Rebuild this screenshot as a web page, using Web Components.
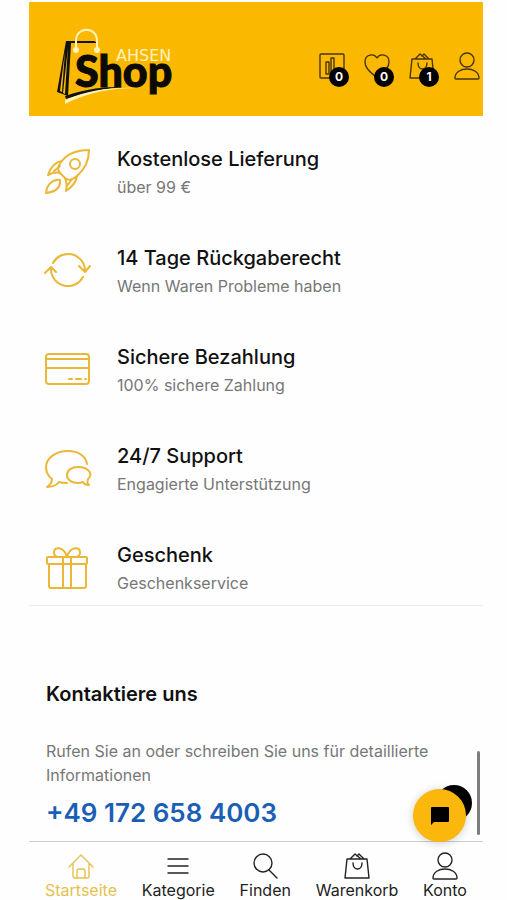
<!DOCTYPE html>
<html lang="de">
<head>
<meta charset="utf-8">
<meta name="viewport" content="width=device-width, initial-scale=1">
<title>Ahsen Shop</title>
<style>
  body {
    margin: 0;
    background: #fefefe;
    color: #111;
    font-family: Inter, "Liberation Sans", sans-serif;
  }
</style>
</head>
<body>
<shop-page>
  <shop-header slot="header"></shop-header>
  <feature-list>
    <feature-item icon="rocket"><span slot="title">Kostenlose Lieferung</span>über 99 €</feature-item>
    <feature-item icon="refresh"><span slot="title">14 Tage Rückgaberecht</span>Wenn Waren Probleme haben</feature-item>
    <feature-item icon="card"><span slot="title">Sichere Bezahlung</span>100% sichere Zahlung</feature-item>
    <feature-item icon="chat"><span slot="title">24/7 Support</span>Engagierte Unterstützung</feature-item>
    <feature-item icon="gift"><span slot="title">Geschenk</span>Geschenkservice</feature-item>
  </feature-list>
  <contact-box phone="+49 172 658 4003">
    <span slot="title">Kontaktiere uns</span>
    Rufen Sie an oder schreiben Sie uns für detaillierte Informationen
  </contact-box>
  <chat-button slot="overlay"></chat-button>
  <tab-bar slot="footer">
    <tab-item icon="home" active>Startseite</tab-item>
    <tab-item icon="menu">Kategorie</tab-item>
    <tab-item icon="search">Finden</tab-item>
    <tab-item icon="bag">Warenkorb</tab-item>
    <tab-item icon="user">Konto</tab-item>
  </tab-bar>
</shop-page>

<script>
// feature icons are drawn on a 44 grid, the small ones on 26
const icons = {
  rocket: [44, `<g transform="translate(-1 -2)"><path d="M44 1C31 1 22 5 16 13c-4 5-3 9-1 11l5 5c3 3 8 2 12-2C40 20 44 12 44 1Z"/><circle cx="30" cy="15" r="5"/><path d="M17 12C10 13 6 17 3 26c4-2 8-3 12-2M32 27c-1 7-5 11-11 15 1-5 1-9-1-13M27 30l-5 7M15 17l-6 5M15 31c-7-1-13 4-14 13 8-1 15-4 14-13Z"/></g>`],
  refresh: [44, `<path d="M7 13a17 17 0 0 1 32 7v1M33 16l6 6 5-6M37 27A17 17 0 0 1 5 20v-2M-1 23l6-6 5 5"/>`],
  card: [44, `<rect y="5" width="43" height="30" rx="3"/><path d="M0 10h43M0 19h43"/><path stroke-dasharray="3 4 5 4 1 9" d="M23 30h18"/>`],
  chat: [44, `<path d="M41 16C40 8 32 3 22 3 10 3 0 10 0 19c0 5 2 9 6 12 0 4-2 6-5 8 6 0 9-1 12-5 3 1 5 1 8 1"/><path d="M32 19c-6 0-11 3-11 8s5 8 11 8c2 0 3 0 5-1 1 2 3 3 6 3-2-2-2-3-1-6 6-5 0-12-10-12Z"/>`],
  gift: [44, `<rect x="1" y="10" width="40" height="7" rx="1"/><path d="M3 17v22q0 2 2 2h33q2 0 2-2V17M17 10v31M25 10v31M21 10C18-1 7-1 8 6c0 2 1 3 3 4M21 10C24-1 35-1 34 6c0 2-1 3-3 4"/>`],
  chart: [26, `<rect x="1" y="1" width="24" height="24" rx="1"/><path d="M7 9h3v12H7zM12 5h3v16h-3z"/>`],
  heart: [26, `<path d="M13 5C10 0 1 1 1 9c0 7 7 11 12 16 5-5 12-9 12-16 0-8-9-9-12-4Z"/>`],
  bag: [26, `<path d="M3 6h20l2 19H1ZM6 6l5-5 6 5M13 3l2-2 5 5M9 10c0 8 9 8 9 0"/>`],
  user: [26, `<circle cx="13" cy="7" r="7"/><path d="M1 25c0-12 24-12 24 0q0 1-1 1H2q-1 0-1-1Z"/>`],
  home: [26, `<path d="M1 14 13 2l12 12M5 10v13q0 2 2 2h12q2 0 2-2V10M9 25v-7q0-2 2-2h4q2 0 2 2v7"/>`],
  menu: [26, `<path d="M3 6h20M3 13h20M3 20h20"/>`],
  search: [26, `<circle cx="11" cy="10" r="9"/><path d="m17 17 8 8"/>`],
};

class ShopIcon extends HTMLElement {
  connectedCallback() {
    const [size, shapes] = icons[this.getAttribute("name")];
    const width = size === 44 ? 2 : 1.4;
    this.attachShadow({ mode: "open" }).innerHTML = `
      <style>
        :host { display: block; flex: none; width: ${size}px; height: ${size}px; }
        svg { display: block; overflow: visible; }
      </style>
      <svg width="${size}" height="${size}" viewBox="0 0 ${size} ${size}" fill="none" stroke="currentColor"
        stroke-width="${width}" stroke-linejoin="round" stroke-linecap="round" aria-hidden="true">${shapes}</svg>`;
  }
}

class ShopPage extends HTMLElement {
  connectedCallback() {
    this.attachShadow({ mode: "open" }).innerHTML = `
      <style>
        :host {
          position: relative;
          display: flex;
          flex-direction: column;
          box-sizing: border-box;
          min-height: 100vh;
          padding: 2px 24px 0 29px;
        }
        main { flex: 1; }
      </style>
      <slot name="header"></slot>
      <main><slot></slot></main>
      <slot name="footer"></slot>
      <slot name="overlay"></slot>`;
  }
}

class ShopLogo extends HTMLElement {
  connectedCallback() {
    this.attachShadow({ mode: "open" }).innerHTML = `
      <style>
        :host { display: block; }
        svg { display: block; }
        .shop { font: 900 43px Lato, sans-serif; }
        .ahsen { font: 16px "DejaVu Sans", sans-serif; }
      </style>
      <svg width="120" height="80" viewBox="0 0 120 80" role="img" aria-label="Ahsen Shop">
        <path d="M9 14h28l4 2H14l-3 53-11-4Z" fill="#111"/>
        <path d="M8 24 3 64l2 1ZM11 20 6 66l2 1Z" fill="#fbb800"/>
        <path d="M8 69c24-8 38-9 58-9-20 2-35 5-57 12Z" fill="#111"/>
        <path d="M8 73c24-10 46-13 73-12-28 0-49 4-73 16Z" fill="#fff3bd"/>
        <path d="M19 23V14c0-15 21-15 21 0v9" fill="none" stroke="#fff3bd" stroke-width="2"/>
        <circle cx="19" cy="23" r="3" fill="#fff3bd"/><circle cx="40" cy="23" r="3" fill="#fff3bd"/>
        <text class="shop" x="18" y="60" fill="#0c0a04" stroke="#0c0a04">Shop</text>
        <text class="ahsen" x="59" y="34" fill="#fff3bd">AHSEN</text>
      </svg>`;
  }
}

class ShopHeader extends HTMLElement {
  connectedCallback() {
    this.attachShadow({ mode: "open" }).innerHTML = `
      <style>
        :host {
          display: flex;
          align-items: center;
          justify-content: space-between;
          box-sizing: border-box;
          height: 114px;
          padding: 14px 3px 0 28px;
          background: #fbb800;
        }
        shop-logo { align-self: flex-start; margin-top: 11px; }
        nav { display: flex; gap: 19px; }
        a { position: relative; color: #4a3507; }
        .badge {
          position: absolute;
          top: 14px;
          left: 10px;
          width: 20px;
          border-radius: 50%;
          background: #000;
          color: #fff;
          font-size: 12px;
          font-weight: 700;
          line-height: 20px;
          text-align: center;
        }
      </style>
      <shop-logo></shop-logo>
      <nav>
        <a href="#compare" aria-label="Vergleichen"><shop-icon name="chart"></shop-icon><span class="badge">0</span></a>
        <a href="#wishlist" aria-label="Wunschliste"><shop-icon name="heart"></shop-icon><span class="badge">0</span></a>
        <a href="#cart" aria-label="Warenkorb"><shop-icon name="bag"></shop-icon><span class="badge">1</span></a>
        <a href="#account" aria-label="Konto"><shop-icon name="user"></shop-icon></a>
      </nav>`;
  }
}

class FeatureList extends HTMLElement {
  connectedCallback() {
    this.attachShadow({ mode: "open" }).innerHTML = `
      <style>
        :host {
          display: grid;
          gap: 43px;
          padding: 29px 17px 8px;
          border-bottom: 1px solid #ececec;
        }
      </style>
      <slot></slot>`;
  }
}

class FeatureItem extends HTMLElement {
  connectedCallback() {
    this.attachShadow({ mode: "open" }).innerHTML = `
      <style>
        :host { display: flex; align-items: center; gap: 27px; }
        shop-icon { color: #ebb737; }
        h3, p { margin: 0; line-height: 28px; }
        h3 { font-size: 20px; font-weight: 500; }
        p { color: #777; font-size: 16px; }
      </style>
      <shop-icon name="${this.getAttribute("icon")}"></shop-icon>
      <div>
        <h3><slot name="title"></slot></h3>
        <p><slot></slot></p>
      </div>`;
  }
}

class ContactBox extends HTMLElement {
  connectedCallback() {
    const phone = this.getAttribute("phone");
    this.attachShadow({ mode: "open" }).innerHTML = `
      <style>
        :host { display: block; padding: 74px 17px 8px; }
        h2 { margin: 0 0 31px; font-size: 20px; font-weight: 600; line-height: 28px; }
        p { margin: 0 0 8px; color: #777; font-size: 16px; line-height: 24px; }
        a { color: #1a5fb4; font-size: 26px; font-weight: 600; line-height: 36px; text-decoration: none; }
      </style>
      <h2><slot name="title"></slot></h2>
      <p><slot></slot></p>
      <a href="tel:${phone.replaceAll(" ", "")}">${phone}</a>`;
  }
}

class ChatButton extends HTMLElement {
  connectedCallback() {
    this.attachShadow({ mode: "open" }).innerHTML = `
      <style>
        :host { display: block; }
        button {
          position: absolute;
          border: 0;
          border-radius: 50%;
          padding: 0;
          cursor: pointer;
        }
        .top { right: 35px; bottom: 79px; width: 36px; height: 36px; background: #000; }
        .chat {
          right: 41px;
          bottom: 58px;
          display: grid;
          place-items: center;
          width: 53px;
          height: 53px;
          background: #fbb70b;
          box-shadow: 0 1px 8px rgba(0, 0, 0, 0.2);
        }
        .thumb {
          position: absolute;
          right: 27px;
          bottom: 65px;
          width: 3px;
          height: 84px;
          border-radius: 2px;
          background: #7d7d7d;
        }
      </style>
      <button class="top" aria-label="Nach oben"></button>
      <button class="chat" aria-label="Chat">
        <svg width="20" height="20" viewBox="0 0 20 20"><path d="M2 1h16q1 0 1 1v13q0 1-1 1H4l-3 3V2q0-1 1-1Z"/></svg>
      </button>
      <div class="thumb"></div>`;
  }
}

class TabBar extends HTMLElement {
  connectedCallback() {
    this.attachShadow({ mode: "open" }).innerHTML = `
      <style>
        :host { display: block; border-top: 1px solid #ccc; }
        nav { display: flex; justify-content: space-between; padding: 11px 16px 0; }
      </style>
      <nav><slot></slot></nav>`;
  }
}

class TabItem extends HTMLElement {
  connectedCallback() {
    const label = this.textContent.toLowerCase();
    this.attachShadow({ mode: "open" }).innerHTML = `
      <style>
        :host { display: block; color: #222; }
        :host([active]) { color: #e5c150; }
        a {
          display: flex;
          flex-direction: column;
          align-items: center;
          gap: 1px;
          color: inherit;
          font-size: 16px;
          line-height: 20px;
          text-decoration: none;
        }
      </style>
      <a href="#${label}"><shop-icon name="${this.getAttribute("icon")}"></shop-icon><span><slot></slot></span></a>`;
  }
}

customElements.define("shop-icon", ShopIcon);
customElements.define("shop-logo", ShopLogo);
customElements.define("shop-header", ShopHeader);
customElements.define("feature-item", FeatureItem);
customElements.define("feature-list", FeatureList);
customElements.define("contact-box", ContactBox);
customElements.define("chat-button", ChatButton);
customElements.define("tab-item", TabItem);
customElements.define("tab-bar", TabBar);
customElements.define("shop-page", ShopPage);
</script>
</body>
</html>
